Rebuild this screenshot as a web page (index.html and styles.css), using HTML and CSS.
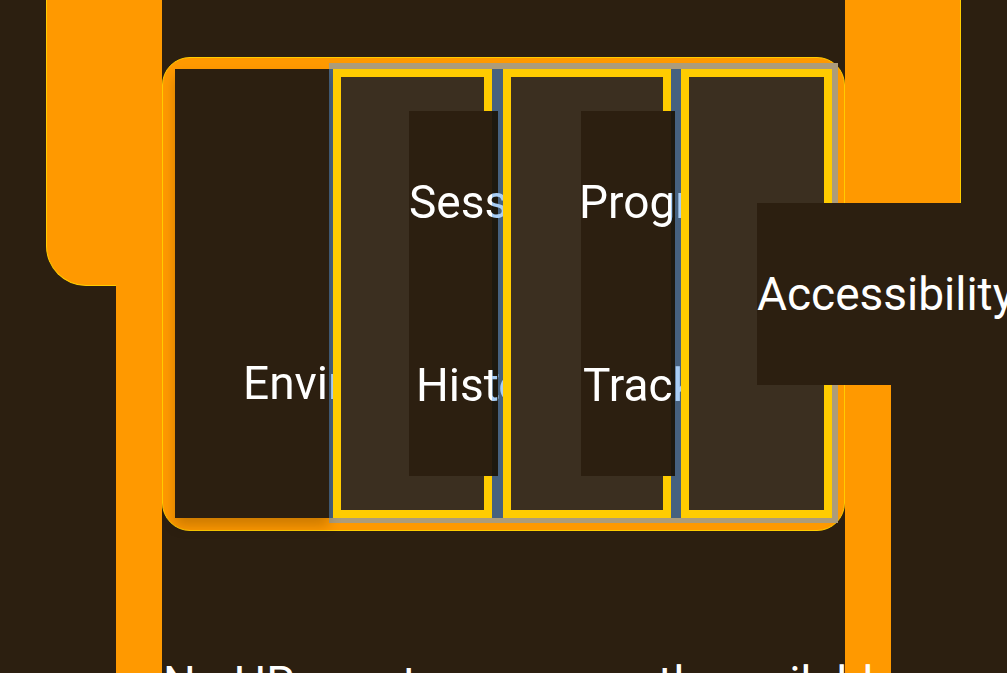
FILE: index.html
```html
<!DOCTYPE html>
<html lang="en">
<head>
<meta charset="utf-8">
<title>Dashboard</title>
<link rel="stylesheet" href="styles.css">
</head>
<body>
<div class="page">
  <div class="frame"></div>
  <main class="rail">
    <div class="column">
      <section class="card">
        <div class="lane"><span class="label">Environment</span></div>
        <div class="strip">
          <div class="sep sep-a"></div>
          <div class="tile tile-a">
            <div class="stack stack-a">
              <div class="cell cell-a1"><span class="label">Sessions</span></div>
              <div class="cell cell-a2"><span class="label">History</span></div>
            </div>
          </div>
          <div class="sep sep-b"></div>
          <div class="tile tile-b">
            <div class="stack stack-b">
              <div class="cell cell-b1"><span class="label">Progress</span></div>
              <div class="cell cell-b2"><span class="label">Tracking</span></div>
            </div>
          </div>
          <div class="sep sep-c"></div>
          <div class="tile tile-c"></div>
        </div>
      </section>
      <p class="empty">No HR events are currently available</p>
    </div>
  </main>
  <div class="popout"><span class="label">Accessibility</span></div>
</div>
</body>
</html>
```

FILE: styles.css
```css
html, body {
  margin: 0;
  padding: 0;
  background: #2c1f10;
  font-family: Roboto, "Noto Sans", "Liberation Sans", sans-serif;
}

.page {
  position: relative;
  width: 1007px;
  height: 673px;
  overflow: hidden;
  background: #2c1f10;
}

.frame {
  position: absolute;
  left: 46px;
  top: -41px;
  width: 915px;
  height: 327px;
  box-sizing: border-box;
  background: #ff9900;
  border: 1px solid #ffcc00;
  border-top: none;
  border-radius: 0 0 40px 40px;
}

.rail {
  position: relative;
  z-index: 1;
  margin-left: 116px;
  width: 775px;
  height: 673px;
  box-sizing: border-box;
  border-left: 46px solid #ff9900;
  border-right: 46px solid #ff9900;
}

.column {
  height: 100%;
  box-sizing: border-box;
  padding-top: 57px;
  background: #2c1f10;
}

.card {
  position: relative;
  z-index: 0;
  display: flex;
  height: 474px;
  box-sizing: border-box;
  padding: 11px 6px 12px 12px;
  background: #ff9900;
  border: 1px solid #ffcc00;
  border-radius: 28px;
}

.label {
  color: #ffffff;
  font-size: 46px;
  line-height: 54px;
  font-weight: 400;
  white-space: nowrap;
}

.lane {
  position: relative;
  z-index: 2;
  flex: none;
  width: 154px;
  box-sizing: border-box;
  display: flex;
  flex-direction: column;
  justify-content: flex-end;
  padding: 0 0 108px 68px;
  background: #2c1f10;
  box-shadow: 0 8px 12px rgba(0, 0, 0, 0.2);
}

.strip {
  position: relative;
  display: flex;
  flex: none;
  width: 509px;
  box-sizing: border-box;
  margin: -6px 0 -5px;
  padding: 6px 6px 5px 0;
  background: #ac9c7b;
}

.sep {
  position: relative;
  flex: none;
  background: #6a7984;
}

.sep::after {
  content: "";
  position: absolute;
  inset: 0;
  z-index: 4;
  background: #a8cdf5;
  mix-blend-mode: multiply;
}

.sep-a { width: 4px; }
.sep-b { width: 11px; }
.sep-c { width: 10px; }

.tile {
  position: relative;
  z-index: 3;
  flex: none;
  box-sizing: border-box;
  border: 8px solid #ffcc00;
  background: #3b2f20;
}

.tile-a { width: 159px; }
.tile-b { width: 168px; }
.tile-c { width: 151px; }

.stack {
  position: absolute;
  top: 34px;
  height: 365px;
  display: flex;
  flex-direction: column;
  background: #2c1f10;
}

.stack-a { left: 68px; width: 89px; }
.stack-b { left: 70px; width: 94px; }

.cell {
  flex: 1;
  display: flex;
  align-items: center;
}

.cell-a1 { padding-left: 0; }
.cell-a2 { padding-left: 7px; }
.cell-b1 { padding-left: 0; }
.cell-b1 .label { margin-left: -2px; }
.cell-b2 { padding-left: 2px; }

.empty {
  margin: 125px 0 0;
  padding-left: 1px;
  color: #ffffff;
  font-size: 46px;
  font-weight: 400;
  line-height: 54px;
  white-space: nowrap;
}

.popout {
  position: absolute;
  z-index: 5;
  left: 757px;
  top: 203px;
  width: 260px;
  height: 182px;
  box-sizing: border-box;
  display: flex;
  align-items: center;
  padding-left: 0;
  background: #2c1f10;
}
```
